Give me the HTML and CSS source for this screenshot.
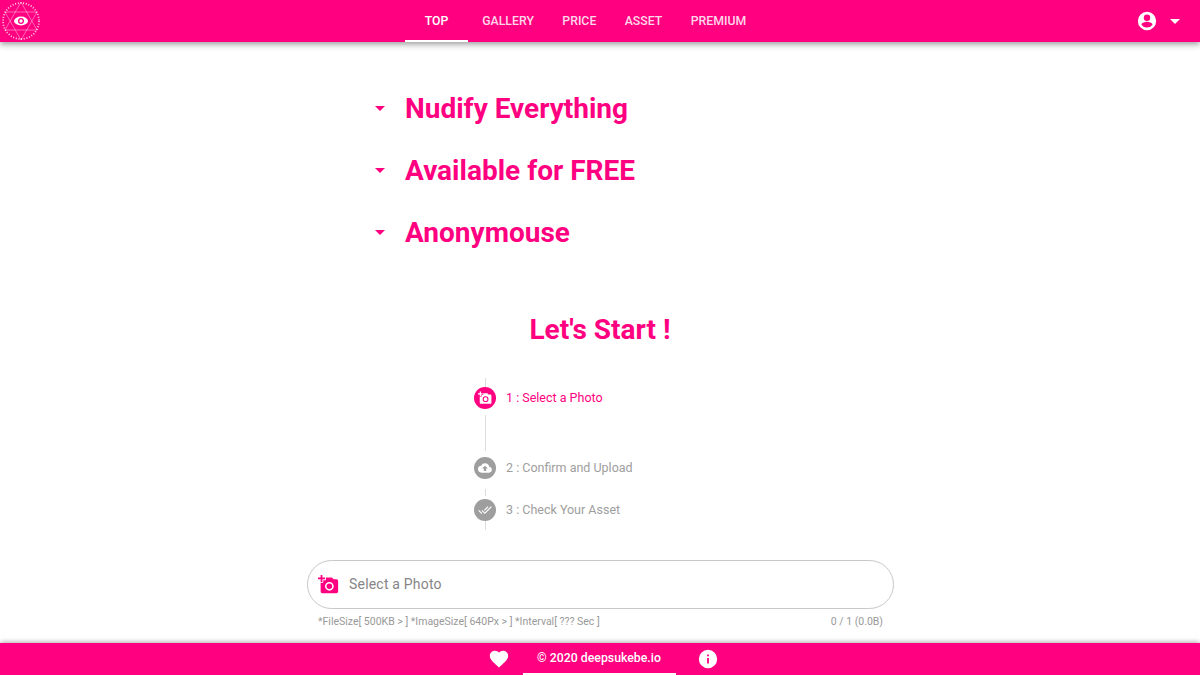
FILE: index.html
```html
<!DOCTYPE html>
<html lang="en">
<head>
    <meta charset="UTF-8">
    <meta name="viewport" content="width=device-width, initial-scale=1.0">
    <title>DeepSukebe</title>
    <link rel="stylesheet" href="styles.css">
</head>
<body>
    <header class="topbar">
        <svg class="logo" viewBox="0 0 42 42" fill="none" stroke="#fff">
            <circle class="logo-ring" cx="21" cy="21" r="18"/>
            <path class="logo-star" d="M21 2 37 30H5Z M21 40 5 12H37Z"/>
            <ellipse cx="21" cy="21" rx="7" ry="4.400" fill="#fff" stroke="none"/>
            <circle cx="21" cy="21" r="3" fill="#ff0080" stroke="none"/>
            <circle cx="21" cy="21" r="1.700" fill="#fff" stroke="none"/>
        </svg>
        <nav class="tabs">
            <a class="tab active">Top</a>
            <a class="tab">Gallery</a>
            <a class="tab">Price</a>
            <a class="tab">Asset</a>
            <a class="tab">Premium</a>
        </nav>
        <div class="account">
            <svg class="account-icon" viewBox="0 0 24 24"><path d="M12 2a10 10 0 1 0 0 20 10 10 0 0 0 0-20Zm0 3a3.500 3.500 0 1 1 0 7 3.500 3.500 0 0 1 0-7Zm0 14.200a7.200 7.200 0 0 1-6-3.200c0-2 4-3.100 6-3.100s6 1.100 6 3.100a7.200 7.200 0 0 1-6 3.200Z"/></svg>
            <span class="caret white"></span>
        </div>
    </header>

    <main class="main">
        <ul class="features">
            <li class="feature"><span class="caret"></span><h2>Nudify Everything</h2></li>
            <li class="feature"><span class="caret"></span><h2>Available for FREE</h2></li>
            <li class="feature"><span class="caret"></span><h2>Anonymouse</h2></li>
        </ul>

        <h1 class="start">Let's Start !</h1>

        <div class="steps">
            <div class="line short"></div>
            <div class="step current">
                <span class="step-icon">
                    <svg viewBox="0 0 24 24"><path d="M3 4V1h2v3h3v2H5v3H3V6H0V4Zm3 6V7h3V4h7l1.800 2H21a2 2 0 0 1 2 2v12a2 2 0 0 1-2 2H5a2 2 0 0 1-2-2V10Zm7 9a5 5 0 1 0 0-10 5 5 0 0 0 0 10Zm-3.200-5a3.200 3.200 0 1 0 6.400 0 3.200 3.200 0 0 0-6.400 0Z"/></svg>
                </span>
                <span class="step-label">1 : Select a Photo</span>
            </div>
            <div class="line tall"></div>
            <div class="step">
                <span class="step-icon">
                    <svg viewBox="0 0 24 24"><path d="M19.350 10.040A7.490 7.490 0 0 0 12 4a7.500 7.500 0 0 0-6.650 4.040A6 6 0 0 0 6 20h13a5 5 0 0 0 .35-9.960ZM14 13v4h-4v-4H7l5-5 5 5Z"/></svg>
                </span>
                <span class="step-label">2 : Confirm and Upload</span>
            </div>
            <div class="line gap"></div>
            <div class="step">
                <span class="step-icon">
                    <svg viewBox="0 0 24 24"><path d="M18 7l-1.400-1.400-6.300 6.300 1.400 1.400L18 7Zm4.200-1.400L11.700 16.200 7.500 12l-1.400 1.400 5.600 5.600 12-12-1.500-1.400ZM.4 13.400 6 19l1.400-1.400L1.800 12 .4 13.400Z"/></svg>
                </span>
                <span class="step-label">3 : Check Your Asset</span>
            </div>
            <div class="line short"></div>
        </div>

        <div class="upload">
            <div class="upload-field">
                <svg class="upload-icon" viewBox="0 0 24 24"><path d="M3 4V1h2v3h3v2H5v3H3V6H0V4Zm3 6V7h3V4h7l1.830 2H21a2 2 0 0 1 2 2v12a2 2 0 0 1-2 2H5a2 2 0 0 1-2-2V10Zm7 9a5 5 0 1 0 0-10 5 5 0 0 0 0 10Zm-3.200-5a3.200 3.200 0 1 0 6.400 0 3.200 3.200 0 0 0-6.400 0Z"/></svg>
                <span class="upload-label">Select a Photo</span>
            </div>
            <div class="upload-hints">
                <span>*FileSize[ 500KB &gt; ] *ImageSize[ 640Px &gt; ] *Interval[ ??? Sec ]</span>
                <span>0 / 1 (0.0B)</span>
            </div>
        </div>
    </main>

    <footer class="footer">
        <svg class="footer-icon" viewBox="0 0 24 24"><path d="m12 21.350-1.450-1.320C5.400 15.360 2 12.280 2 8.500 2 5.420 4.420 3 7.500 3c1.740 0 3.410.81 4.500 2.090C13.090 3.810 14.760 3 16.500 3 19.580 3 22 5.420 22 8.500c0 3.780-3.400 6.860-8.550 11.540L12 21.350Z"/></svg>
        <a class="copyright">© 2020 deepsukebe.io</a>
        <svg class="footer-icon" viewBox="0 0 24 24"><path d="M12 2a10 10 0 1 0 0 20 10 10 0 0 0 0-20Zm1 15h-2v-6h2v6Zm0-8h-2V7h2v2Z"/></svg>
    </footer>
</body>
</html>
```

FILE: styles.css
```css
* {
    box-sizing: border-box;
}

html,
body {
    height: 100%;
}

body {
    margin: 0;
    display: flex;
    flex-direction: column;
    height: 675px;
    overflow: hidden;
    background-color: #fff;
    font-family: Roboto, "Liberation Sans", sans-serif;
    color: #ff0080;
}

.topbar {
    flex: none;
    display: flex;
    align-items: center;
    height: 42px;
    background-color: #ff0080;
    box-shadow: 0 2px 4px -1px rgba(0, 0, 0, 0.2), 0 4px 5px rgba(0, 0, 0, 0.14), 0 1px 10px rgba(0, 0, 0, 0.12);
    position: relative;
    z-index: 2;
}

.logo {
    width: 42px;
    height: 42px;
    flex: none;
}

.logo-ring {
    stroke-width: 1.800;
    stroke-dasharray: 1 1.700;
    opacity: 0.8;
}

.logo-star {
    stroke-width: 0.5;
    opacity: 0.8;
}

.tabs {
    display: flex;
    height: 42px;
    margin-left: 363px;
}

.tab {
    display: flex;
    align-items: center;
    justify-content: center;
    padding: 0 14.200px;
    font-size: 12.300px;
    font-weight: 500;
    text-transform: uppercase;
    color: rgba(255, 255, 255, 0.85);
    cursor: pointer;
}

.tab.active {
    width: 63px;
    padding-left: 0;
    padding-right: 0;
    padding-top: 2px;
    color: #fff;
    border-bottom: 2px solid #fff;
}

.account {
    margin-left: auto;
    display: flex;
    align-items: center;
    gap: 12px;
    padding-right: 20px;
}

.account-icon {
    width: 22px;
    height: 22px;
    fill: #fff;
}

.caret {
    display: block;
    width: 0;
    height: 0;
    border-left: 5px solid transparent;
    border-right: 5px solid transparent;
    border-top: 5px solid #ff0080;
}

.caret.white {
    border-top-color: #fff;
}

.main {
    flex: 1;
    min-height: 0;
    display: flex;
    flex-direction: column;
    align-items: center;
}

.features {
    list-style: none;
    margin: 35px 0 0;
    padding: 0;
    width: 450px;
}

.feature {
    display: flex;
    align-items: center;
    height: 62px;
}

.feature .caret {
    margin-right: 20px;
}

.feature h2 {
    margin: 0;
    font-size: 28px;
    font-weight: 700;
}

.start {
    margin: 47px 0 0;
    height: 40px;
    line-height: 40px;
    font-size: 28px;
    font-weight: 700;
}

.steps {
    margin-top: 28px;
    width: 252px;
    font-size: 12.500px;
    color: #9e9e9e;
}

.step {
    display: flex;
    align-items: center;
    gap: 10px;
    height: 22px;
}

.step-label {
    padding-bottom: 2px;
}

.step.current {
    color: #ff0080;
}

.step-icon {
    width: 22px;
    height: 22px;
    border-radius: 50%;
    display: flex;
    align-items: center;
    justify-content: center;
    background-color: #9e9e9e;
}

.step.current .step-icon {
    background-color: #ff0080;
}

.step-icon svg {
    width: 14px;
    height: 14px;
    fill: #fff;
}

.line {
    width: 1px;
    margin-left: 11px;
    background-color: #ddd;
}

.line.short {
    height: 9px;
}

.line.tall {
    height: 36px;
    margin-top: 6px;
    margin-bottom: 6px;
}

.line.gap {
    height: 7px;
    margin-top: 10px;
    margin-bottom: 3px;
}

.upload {
    margin-top: 30px;
    width: 587px;
    margin-left: 1px;
}

.upload-field {
    display: flex;
    align-items: center;
    gap: 10px;
    height: 49px;
    padding-left: 10px;
    border: 1px solid #c8c8c8;
    border-radius: 25px;
    font-size: 14px;
    letter-spacing: 0.2px;
    color: #858585;
}

.upload-label {
    padding-bottom: 2px;
}

.upload-icon {
    width: 21px;
    height: 21px;
    fill: #ff0080;
}

.upload-hints {
    display: flex;
    justify-content: space-between;
    padding: 7px 11px 0 11px;
    font-size: 10.500px;
    line-height: 12px;
    color: #999;
}

.footer {
    flex: none;
    display: flex;
    align-items: center;
    justify-content: center;
    height: 32px;
    padding-left: 6px;
    background-color: #ff0080;
    box-shadow: 0 -2px 4px -1px rgba(0, 0, 0, 0.2), 0 -1px 6px rgba(0, 0, 0, 0.14);
    color: #fff;
}

.footer-icon {
    width: 22px;
    height: 22px;
    fill: #fff;
}

.copyright {
    display: flex;
    align-items: center;
    justify-content: center;
    width: 153px;
    height: 32px;
    margin: 0 21px 0 13px;
    font-size: 12.300px;
    font-weight: 500;
    border-bottom: 2px solid #fff;
}
```
